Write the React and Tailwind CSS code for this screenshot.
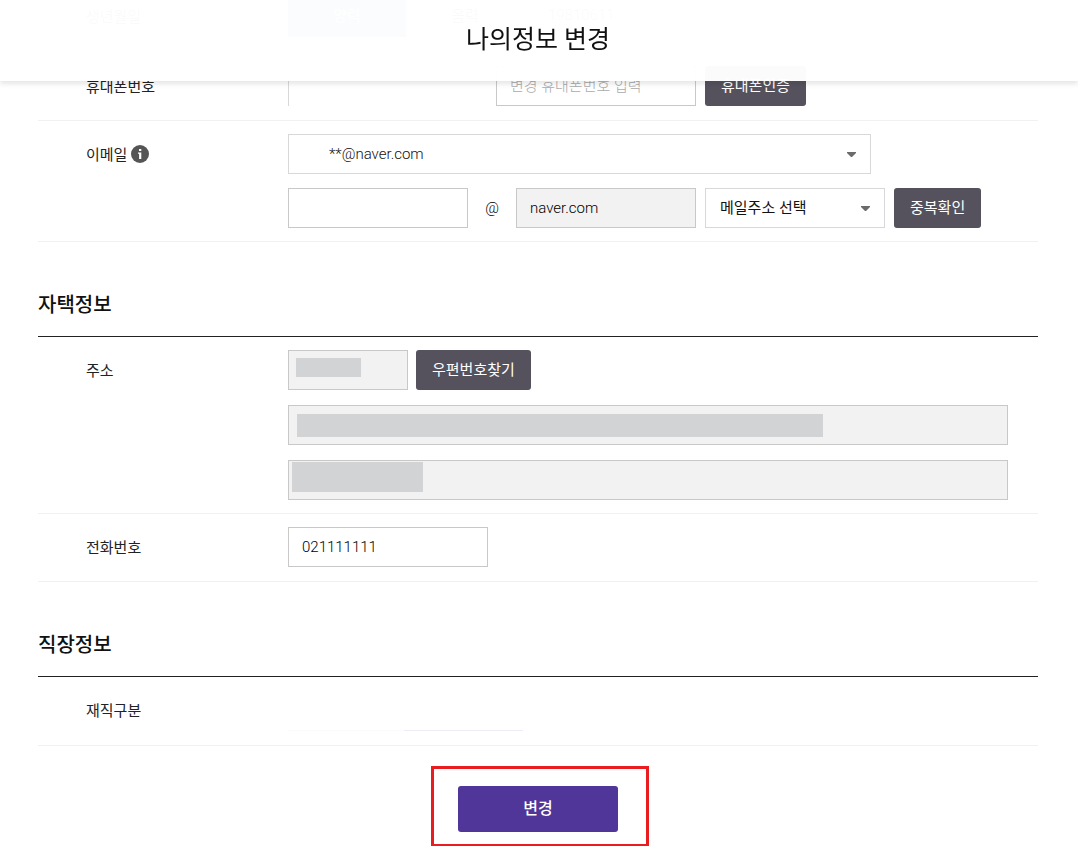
import React from 'react';

const inputBase = 'h-10 border border-[#c8c8c8] px-[13px] text-[15px] font-light text-black rounded-none outline-none';

function Row({ label, htmlFor, icon, children }) {
  return (
    <div className="flex border-b border-[#f1f1f1] pt-[13px] pb-[13px] pl-12">
      <div className="flex h-10 w-[202px] shrink-0 items-center gap-1 text-[15px] text-[#222]">
        <label htmlFor={htmlFor} className="pt-0.5">{label}</label>
        {icon}
      </div>
      <div className="min-h-[41px] min-w-0 flex-1">{children}</div>
    </div>
  );
}

function SectionTitle({ children }) {
  return (
    <h2 className="border-b border-[#222] pt-12 pb-4 text-[20px] leading-[30px] font-medium text-[#111]">
      {children}
    </h2>
  );
}

function DarkButton({ children }) {
  return (
    <button type="button" className="h-10 shrink-0 rounded-[3px] bg-[#55525d] px-4 text-[15px] whitespace-nowrap text-white">
      {children}
    </button>
  );
}

function SelectBox({ id, label, className, selectClass, options }) {
  return (
    <div className={`relative ${className}`}>
      <select
        id={id}
        aria-label={label}
        className={`block h-10 w-full appearance-none border border-[#d8d8d8] bg-white pr-8 text-[15px] text-[#111] outline-none ${selectClass}`}
      >
        {options.map((option) => (
          <option key={option}>{option}</option>
        ))}
      </select>
      <svg className="pointer-events-none absolute top-[18px] right-[15px]" width="9" height="5" viewBox="0 0 9 5">
        <path d="M0 0h9v1L5 5H4L0 1z" fill="#6b6b6b" />
      </svg>
    </div>
  );
}

function InfoButton() {
  return (
    <button type="button" aria-label="이메일 안내" className="h-[18px] w-[18px]">
      <svg width="18" height="18" viewBox="0 0 18 18">
        <circle cx="9" cy="9" r="9" fill="#555" />
        <path d="M8 4h2.3v2H8zM7 7.4h3.3V14H8.1V8.8H7z" fill="#fff" />
      </svg>
    </button>
  );
}

export default function App() {
  return (
    <div className="bg-white font-[Roboto,'Noto_Sans_CJK_KR',sans-serif]">
      <header className="fixed inset-x-0 top-0 z-10 flex h-[81px] justify-center bg-white/98 pt-[22px] pr-0.5 shadow-[0_3px_5px_rgba(0,0,0,0.1)]">
        <h1 className="text-[25px] leading-9 text-[#111]">나의정보 변경</h1>
      </header>

      <form className="pr-10 pb-[14px] pl-[38px]">
        {/* birth date, scrolled behind the header */}
        <div className="flex border-b border-[#f1f1f1] pb-[15px] pl-12 text-[15px] text-[#222]">
          <span className="w-[202px] pt-1.5">생년월일</span>
          <button type="button" className="h-[37px] w-[118px] bg-[#3b5fc0] pb-1 text-white">양력</button>
          <button type="button" className="h-[37px] w-[118px] pb-1">음력</button>
          <span className="pt-1 pl-6 font-light">19810611</span>
        </div>

        <Row label="휴대폰번호" htmlFor="phone">
          <div className="flex">
            <input aria-label="현재 휴대폰번호" readOnly className="h-10 w-[208px] border-l border-[#d8d8d8] px-[13px] outline-none" />
            <input
              id="phone"
              placeholder="변경 휴대폰번호 입력"
              className={`${inputBase} mr-[9px] w-[200px] placeholder:text-[#aaa]`}
            />
            <DarkButton>휴대폰인증</DarkButton>
          </div>
        </Row>

        <Row label="이메일" htmlFor="email" icon={<InfoButton />}>
          <SelectBox id="email" className="max-w-[583px]" selectClass="pl-10 font-light" options={['**@naver.com']} />
          <div className="mt-[14px] flex items-center">
            <input aria-label="이메일 아이디" className={`${inputBase} w-[180px]`} />
            <span className="w-12 text-center text-[15px] font-light text-black">@</span>
            <input aria-label="이메일 도메인" readOnly value="naver.com" className={`${inputBase} mr-[9px] w-[180px] bg-[#f2f2f2]`} />
            <SelectBox label="메일주소" className="mr-[9px] w-[180px]" selectClass="pl-[14px]" options={['메일주소 선택']} />
            <DarkButton>중복확인</DarkButton>
          </div>
        </Row>

        <SectionTitle>자택정보</SectionTitle>
        <Row label="주소" htmlFor="zip">
          <div className="relative flex gap-2">
            <input id="zip" readOnly className={`${inputBase} w-[120px] bg-[#f2f2f2]`} />
            <span className="absolute top-2 left-2 h-[19px] w-[65px] bg-[#d2d3d5]" />
            <DarkButton>우편번호찾기</DarkButton>
          </div>
          <div className="relative mt-[15px] max-w-[720px]">
            <input aria-label="기본주소" readOnly className={`${inputBase} block w-full bg-[#f2f2f2]`} />
            <span className="absolute top-[9px] left-[9px] h-[23px] w-[526px] bg-[#d2d3d5]" />
          </div>
          <div className="relative mt-[15px] max-w-[720px]">
            <input aria-label="상세주소" readOnly className={`${inputBase} block w-full bg-[#f2f2f2]`} />
            <span className="absolute top-0.5 left-1 h-[30px] w-[131px] bg-[#d2d3d5]" />
          </div>
        </Row>
        <Row label="전화번호" htmlFor="tel">
          <input id="tel" defaultValue="021111111" className={`${inputBase} block w-[200px]`} />
        </Row>

        <SectionTitle>직장정보</SectionTitle>
        <Row label="재직구분">
          <div className="mb-px flex h-[41px]">
            <span className="w-[116px] border-b border-[#fbfbfb]" />
            <span className="w-[119px] border-b border-[#eeedf5]" />
          </div>
        </Row>

        <div className="mt-10 flex justify-center">
          <div className="relative">
            <button type="submit" className="h-[46px] w-40 rounded-[3px] bg-[#503698] text-[16px] font-medium text-white">
              변경
            </button>
            <span className="pointer-events-none absolute -top-5 -right-[31px] -bottom-[15px] -left-[27px] border-3 border-[#e91c1f]" />
          </div>
        </div>
      </form>
    </div>
  );
}
